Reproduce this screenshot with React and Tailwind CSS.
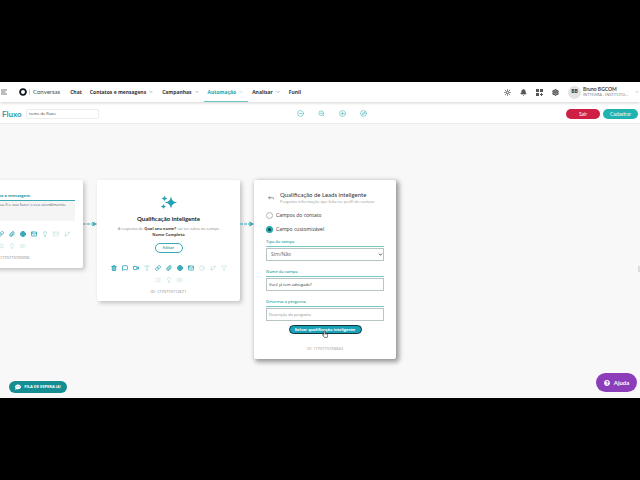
import React, { useState } from 'react';
import {
  ChevronDown, Bell, Settings, ZoomOut, CircleMinus, CirclePlus, Compass, Trash2, MessageSquare, Video,
  Type, Link, Paperclip, Globe, Mail, Clock, GitBranch, Filter, List, Lightbulb, FastForward,
} from 'lucide-react';
import { FaCommentDots, FaQuestionCircle } from 'react-icons/fa';
import clsx from 'clsx';

const MENU = [
  { label: 'Chat' },
  { label: 'Contatos e mensagens', sub: true },
  { label: 'Campanhas', sub: true },
  { label: 'Automação', sub: true, active: true },
  { label: 'Analisar', sub: true },
  { label: 'Funil' },
];

const TOOLS = [
  { icon: Trash2, name: 'Excluir', solid: true },
  { icon: MessageSquare, name: 'Mensagem' },
  { icon: Video, name: 'Mídia' },
  { icon: Type, name: 'Texto', soft: true },
  { icon: Link, name: 'Link' },
  { icon: Paperclip, name: 'Anexo' },
  { icon: Globe, name: 'Site', solid: true },
  { icon: Mail, name: 'E-mail' },
  { icon: Clock, name: 'Espera', dim: true },
  { icon: GitBranch, name: 'Condição', dim: true },
  { icon: Filter, name: 'Filtro', dim: true },
];

const MESSAGE_TOOLS = [
  ...TOOLS.slice(0, 8),
  { icon: Lightbulb, name: 'Ideia', soft: true },
  { icon: Mail, name: 'Caixa', dim: true },
  { icon: GitBranch, name: 'Condição', dim: true },
];

const EXTRA_TOOLS = [
  { icon: List, name: 'Lista' },
  { icon: Lightbulb, name: 'Sugestão' },
  { icon: FastForward, name: 'Avançar' },
];

function ToolButton({ tool }) {
  const Icon = tool.icon;
  return (
    <button
      type="button"
      aria-label={tool.name}
      className={clsx('flex w-[11px] justify-center', tool.dim ? 'text-[#b5dcdc]' : tool.soft ? 'text-[#7cc4c9]' : 'text-[#1f9db0]')}
    >
      <Icon className={clsx('size-[6px]', tool.solid && 'fill-[#7cc4d0]')} strokeWidth={tool.dim || tool.soft ? 2 : 3} />
    </button>
  );
}

function Toolbox({ tools }) {
  return (
    <div className="flex flex-col items-center gap-[6px]">
      <div className="flex">
        {tools.map(tool => <ToolButton key={tool.name} tool={tool} />)}
      </div>
      <div className="flex">
        {EXTRA_TOOLS.map(tool => <ToolButton key={tool.name} tool={{ ...tool, dim: true }} />)}
      </div>
    </div>
  );
}

function Connector({ className }) {
  return (
    <svg viewBox="0 0 14 6" className={clsx('absolute h-[6px] w-[14px]', className)} fill="none" stroke="#2aa5b5">
      <path d="M0 3h10" strokeDasharray="3 1" />
      <path d="M9.5 1l4 2-4 2 1.2-2z" fill="#2aa5b5" strokeWidth=".6" />
    </svg>
  );
}

function Header() {
  return (
    <header className="relative z-20 flex h-5 items-center bg-white shadow-[0_1px_3px_rgba(0,0,0,0.18)]">
      <button type="button" aria-label="Menu" className="ml-px mr-3 text-[#444]">
        <svg viewBox="0 0 6 6" className="size-[6px]" stroke="currentColor" strokeWidth=".7">
          <path d="M0 1h6M0 3h4.5M0 5h6" />
        </svg>
      </button>
      <a href="#inicio" className="flex items-center font-['Lato',sans-serif] text-[6px] leading-[8px] text-[#33525a]">
        <svg viewBox="0 0 24 24" className="size-2" fill="none">
          <circle cx="12" cy="12" r="8.500" stroke="#111c22" strokeWidth="5" />
          <path d="M0 13c4 0 4-4 7-5M24 11c-4 0-4 4-7 5" stroke="#111c22" strokeWidth="3" />
        </svg>
        <span className="mx-[2px] h-[6px] w-px bg-[#cfd4d6]" />
        <span className="pl-px">Conversas</span>
      </a>
      <nav className="ml-[6px] flex h-full">
        {MENU.map(item => (
          <button
            key={item.label}
            type="button"
            className={clsx(
              'flex items-center gap-[2px] border-b px-1 text-[5px] font-bold leading-[8px]',
              item.active ? 'border-[#6cc5c4] text-[#21a5a8]' : 'border-transparent text-[#333]',
            )}
          >
            {item.label}
            {item.sub && <ChevronDown className="mx-px size-1 opacity-70" strokeWidth={3} />}
          </button>
        ))}
      </nav>
      <div className="ml-auto flex items-center gap-[9px] text-[#555]">
        <button type="button" aria-label="Integrações">
          <svg viewBox="0 0 24 24" className="size-[7px]" fill="none" stroke="currentColor" strokeWidth="2">
            <circle cx="12" cy="12" r="3.500" />
            <path d="M12 3v6M12 15v6M3 12h6M15 12h6M5 5l5 5M14 14l5 5M19 5l-5 5M10 14l-5 5" />
            <path d="M12 1v3M12 20v3M1 12h3M20 12h3M3 3l3 3M18 18l3 3M21 3l-3 3M6 18l-3 3" strokeWidth="3" />
          </svg>
        </button>
        <button type="button" aria-label="Notificações"><Bell className="size-[7px] fill-current" strokeWidth={2} /></button>
        <button type="button" aria-label="Aplicativos">
          <svg viewBox="0 0 14 14" className="size-[7px]" fill="currentColor">
            <path d="M0 0h6v6H0zM8 0h6v6H8zM0 8h6v6H0zM10 8h2v2h2v2h-2v2h-2v-2H8v-2h2z" />
          </svg>
        </button>
        <button type="button" aria-label="Configurações"><Settings className="size-[7px]" strokeWidth={4} /></button>
      </div>
      <button type="button" className="ml-[9px] flex items-center text-left">
        <span className="flex size-[13px] items-center justify-center rounded-full bg-[#e3e3e3] text-[5px] font-bold text-[#333]">BB</span>
        <span className="ml-[2px] flex w-[52px] flex-col">
          <span className="font-['Lato',sans-serif] text-[5px] font-bold leading-[6px] text-[#444]">Bruno BGCOM</span>
          <span className="whitespace-nowrap text-[4px] leading-[6px] text-[#777]">INTTEGRA - INSTITUTO...</span>
        </span>
        <ChevronDown className="mr-px size-1 text-[#888]" strokeWidth={3} />
      </button>
    </header>
  );
}

function FlowBar() {
  const zoom = [
    { icon: CircleMinus, name: 'Diminuir' },
    { icon: ZoomOut, name: 'Afastar' },
    { icon: CirclePlus, name: 'Aumentar' },
    { icon: Compass, name: 'Navegar' },
  ];
  return (
    <div className="relative z-10 grid h-[22px] grid-cols-[1fr_auto_1fr] items-center border-b border-[#ececec] bg-white px-[2px] pt-[2px]">
      <div className="flex items-center gap-1">
        <label htmlFor="flow-name" className="font-['Lato',sans-serif] text-[8px] font-bold leading-[10px] text-[#2a9ca6]">Fluxo</label>
        <input id="flow-name" defaultValue="nome do fluxo" className="h-[10px] w-[73px] rounded-[2px] border border-[#ededed] px-[2px] text-[4px] text-[#444]" />
      </div>
      <div className="ml-6 flex gap-[14px] text-[#45b0b3]">
        {zoom.map(({ icon: Icon, name }) => (
          <button key={name} type="button" aria-label={name}><Icon className="size-[7px]" strokeWidth={2} /></button>
        ))}
      </div>
      <div className="flex justify-end gap-[3px] font-['Lato',sans-serif] text-[5px] leading-[10px] text-white">
        <button type="button" className="h-[10px] w-[34px] rounded-full bg-[#cf1f45]">Sair</button>
        <button type="button" className="h-[10px] w-[35px] rounded-full bg-[#20b2b0]">Cadastrar</button>
      </div>
    </div>
  );
}

function MessageNode() {
  return (
    <section className="absolute -left-[60px] top-[56px] w-[143px] rounded-[2px] bg-white px-2 pb-[7px] pt-[13px] shadow-[2px_2px_4px_rgba(0,0,0,0.22)]">
      <label htmlFor="message" className="block border-b border-[#3aa9b3] pb-px pr-[44px] text-right text-[4px] font-bold leading-[6px] text-[#2a9daa]">
        Escreva a mensagem.
      </label>
      <textarea
        id="message"
        defaultValue="Sou da empresa X e vou fazer o seu atendimento."
        className="block h-5 w-full resize-none overflow-hidden whitespace-nowrap bg-[#f5f5f5] pl-[26px] pt-px text-[4px] leading-[6px] text-[#666]"
      />
      <div className="mt-[10px]"><Toolbox tools={MESSAGE_TOOLS} /></div>
      <p className="mt-[6px] text-center text-[4px] leading-[6px] text-[#888]">ID: 1770770700096</p>
    </section>
  );
}

function QualifyNode() {
  return (
    <section className="absolute left-[97px] top-[56px] flex w-[143px] flex-col items-center rounded-[2px] bg-white pb-[6px] pt-[15px] text-center shadow-[2px_2px_4px_rgba(0,0,0,0.22)]">
      <svg viewBox="0 0 32 30" className="h-[15px] w-4" fill="#23a0b6">
        <path d="M20 3c2 8 4 10 12 12-8 2-10 4-12 12-2-8-4-10-12-12 8-2 10-4 12-12z" />
        <path d="M7 1c1 4 2 5 6 6-4 1-5 2-6 6-1-4-2-5-6-6 4-1 5-2 6-6z" />
        <path d="M5 18c1 3 2 4 5 5-3 1-4 2-5 5-1-3-2-4-5-5 3-1 4-2 5-5z" />
      </svg>
      <h2 className="mt-[5px] font-['Lato',sans-serif] text-[6px] font-bold leading-[8px] text-[#222]">Qualificação inteligente</h2>
      <p className="mt-[3px] whitespace-nowrap text-[4px] leading-[6px] text-[#888]">
        A resposta de <b className="text-[#444]">Qual seu nome?</b> vai ser salva no campo<br />
        <b className="text-[#444]">Nome Completo</b>
      </p>
      <button type="button" className="mb-3 mt-[5px] h-[10px] w-7 rounded-full border border-[#3aabb5] text-[4px] font-semibold leading-[6px] text-[#2a9daa]">Editar</button>
      <Toolbox tools={TOOLS} />
      <p className="mt-[6px] text-[4px] leading-[6px] text-[#888]">ID: 1770770712671</p>
    </section>
  );
}

function Field({ id, label, className, children }) {
  return (
    <div className={className}>
      <label htmlFor={id} className="mb-px block border-b border-[#7cc8c5] pb-px text-[4px] font-semibold leading-[7px] text-[#3aa8a8]">{label}</label>
      {children}
    </div>
  );
}

function LeadForm() {
  const [kind, setKind] = useState('custom');
  const kinds = [['contact', 'Campos do contato'], ['custom', 'Campo customizável']];
  const box = 'block h-[13px] w-full border border-[#b9c4c6] bg-white px-[2px]';

  return (
    <form
      onSubmit={e => e.preventDefault()}
      className="absolute left-[254px] top-[56px] flex w-[142px] flex-col rounded-[2px] bg-white px-3 pb-[7px] pt-[11px] shadow-[2px_2px_5px_1px_rgba(0,0,0,0.4)]"
    >
      <div className="flex items-center gap-[6px]">
        <button type="button" aria-label="Voltar" className="ml-[2px] text-[#666]">
          <svg viewBox="0 0 12 8" className="h-1 w-[6px]" fill="none" stroke="currentColor" strokeWidth="1.4">
            <path d="M4 .5L1 3.500l3 3M1 3.500h8.500q2 0 2 3" />
          </svg>
        </button>
        <div className="whitespace-nowrap">
          <h2 className="font-['Lato',sans-serif] text-[6px] leading-[8px] text-[#333]">Qualificação de Leads inteligente</h2>
          <p className="text-[4px] leading-[5px] text-[#999]">Pergunta informação que falta no perfil do contato</p>
        </div>
      </div>
      <div className="mt-[7px] flex flex-col gap-[6px]">
        {kinds.map(([value, label]) => (
          <label key={value} className="flex items-center gap-[3px] text-[5px] leading-[8px] text-[#333]">
            <input
              type="radio"
              name="kind"
              checked={kind === value}
              onChange={() => setKind(value)}
              className="size-[7px] appearance-none rounded-full border border-[#b5b5b5] checked:border-2 checked:border-[#27a9a9] checked:bg-[#16474c]"
            />
            {label}
          </label>
        ))}
      </div>
      <Field id="field-type" label="Tipo do campo" className="mt-[5px]">
        <div className="relative">
          <select id="field-type" className={clsx(box, 'appearance-none pl-1 text-[5px] text-[#666]')}>
            <option>Sim/Não</option>
          </select>
          <ChevronDown className="pointer-events-none absolute right-px top-1 size-[5px] text-[#333]" strokeWidth={4} />
        </div>
      </Field>
      <Field id="field-name" label="Nome do campo" className="mt-[7px]">
        <input id="field-name" defaultValue="Você já tem advogado?" className={clsx(box, 'text-[4px] text-[#333]')} />
      </Field>
      <Field id="question" label="Descreva a pergunta" className="mt-[7px]">
        <input id="question" placeholder="Descrição da pergunta" className={clsx(box, 'text-[4px] placeholder:text-[#888]')} />
      </Field>
      <button type="submit" className="mt-1 h-[9px] w-[73px] self-center whitespace-nowrap rounded-full border border-[#16343c] bg-[#17a2b8] text-[4px] font-bold leading-[6px] text-white">
        Salvar qualificação inteligente
      </button>
      <p className="mt-3 text-center text-[4px] leading-[6px] text-[#999]">ID: 1770770768840</p>
      <svg viewBox="0 0 16 20" className="pointer-events-none absolute left-[68px] top-[150px] h-2 w-[6px]" fill="#fff" stroke="#222" strokeWidth="1.500">
        <path d="M5 12V3a1.500 1.500 0 013 0v6l5 1q2 .5 2 3l-1 6H6l-5-7q1-2 4 1z" />
      </svg>
    </form>
  );
}

export default function App() {
  return (
    <div className="flex h-screen flex-col bg-black py-[82px] font-['Open_Sans',sans-serif]">
      <div className="relative flex min-h-0 flex-1 flex-col overflow-hidden bg-[#f8f8f8]">
        <Header />
        <FlowBar />
        <main className="relative flex-1">
          <MessageNode />
          <Connector className="left-[83px] top-[97px]" />
          <QualifyNode />
          <Connector className="left-[240px] top-[97px]" />
          <LeadForm />
          <span className="absolute right-0 top-[142px] h-[6px] w-[2px] bg-[#ddd]" />
        </main>
        <button type="button" className="absolute bottom-[5px] left-[9px] z-30 flex h-3 w-[58px] items-center justify-center gap-[3px] whitespace-nowrap rounded-full bg-[#158e93] text-[4px] font-bold leading-[6px] text-white">
          <FaCommentDots className="size-[6px]" />
          FILA DE ESPERA (4)
        </button>
        <button type="button" className="absolute bottom-[6px] right-[3px] z-30 flex h-[19px] w-[41px] items-center justify-center gap-1 rounded-full bg-[#8b3dba] font-['Lato',sans-serif] text-[6px] font-bold leading-[8px] text-white">
          <FaQuestionCircle className="size-[6px]" />
          Ajuda
        </button>
      </div>
    </div>
  );
}
